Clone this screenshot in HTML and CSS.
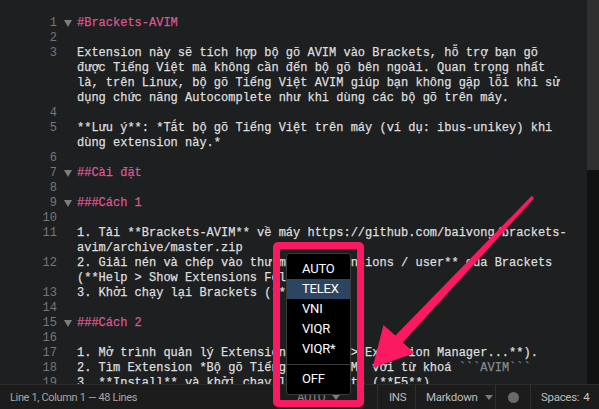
FILE: index.html
```html
<!DOCTYPE html>
<html lang="vi">
<head>
<meta charset="utf-8">
<title>Brackets AVIM</title>
<link rel="stylesheet" href="styles.css">
</head>
<body>
<div class="app">
  <div class="main">
    <div class="editor">
      <div class="row"><span class="ln">1</span><span class="fold"><i class="tri"></i></span><span class="code h">#Brackets-AVIM</span></div>
      <div class="row"><span class="ln">2</span><span class="fold"></span><span class="code"></span></div>
      <div class="row"><span class="ln">3</span><span class="fold"></span><span class="code">Extension này sẽ tích hợp bộ gõ AVIM vào Brackets, hỗ trợ bạn gõ</span></div>
      <div class="row"><span class="ln"></span><span class="fold"></span><span class="code">được Tiếng Việt mà không cần đến bộ gõ bên ngoài. Quan trọng nhất</span></div>
      <div class="row"><span class="ln"></span><span class="fold"></span><span class="code">là, trên Linux, bộ gõ Tiếng Việt AVIM giúp bạn không gặp lỗi khi sử</span></div>
      <div class="row"><span class="ln"></span><span class="fold"></span><span class="code">dụng chức năng Autocomplete như khi dùng các bộ gõ trên máy.</span></div>
      <div class="row"><span class="ln">4</span><span class="fold"></span><span class="code"></span></div>
      <div class="row"><span class="ln">5</span><span class="fold"></span><span class="code">**Lưu ý**: *Tắt bộ gõ Tiếng Việt trên máy (ví dụ: ibus-unikey) khi</span></div>
      <div class="row"><span class="ln"></span><span class="fold"></span><span class="code">dùng extension này.*</span></div>
      <div class="row"><span class="ln">6</span><span class="fold"></span><span class="code"></span></div>
      <div class="row"><span class="ln">7</span><span class="fold"><i class="tri"></i></span><span class="code h">##Cài đặt</span></div>
      <div class="row"><span class="ln">8</span><span class="fold"></span><span class="code"></span></div>
      <div class="row"><span class="ln">9</span><span class="fold"><i class="tri"></i></span><span class="code h">###Cách 1</span></div>
      <div class="row"><span class="ln">10</span><span class="fold"></span><span class="code"></span></div>
      <div class="row"><span class="ln">11</span><span class="fold"></span><span class="code">1. Tải **Brackets-AVIM** về máy https://github.com/baivong/brackets-</span></div>
      <div class="row"><span class="ln"></span><span class="fold"></span><span class="code">avim/archive/master.zip</span></div>
      <div class="row"><span class="ln">12</span><span class="fold"></span><span class="code">2. Giải nén và chép vào thư mục **extensions / user** của Brackets</span></div>
      <div class="row"><span class="ln"></span><span class="fold"></span><span class="code">(**Help &gt; Show Extensions Folder**)</span></div>
      <div class="row"><span class="ln">13</span><span class="fold"></span><span class="code">3. Khởi chạy lại Brackets (**F5**)</span></div>
      <div class="row"><span class="ln">14</span><span class="fold"></span><span class="code"></span></div>
      <div class="row"><span class="ln">15</span><span class="fold"><i class="tri"></i></span><span class="code h">###Cách 2</span></div>
      <div class="row"><span class="ln">16</span><span class="fold"></span><span class="code"></span></div>
      <div class="row"><span class="ln">17</span><span class="fold"></span><span class="code">1. Mở trình quản lý Extension (**File &gt; Extension Manager...**).</span></div>
      <div class="row"><span class="ln">18</span><span class="fold"></span><span class="code">2. Tìm Extension *Bộ gõ Tiếng Việt AVIM* với từ khoá <span class="tick">```AVIM```</span></span></div>
      <div class="row"><span class="ln">19</span><span class="fold"></span><span class="code">3. **Install** và khởi chạy lại Brackets (**F5**)</span></div>
    </div>
    <div class="scrollbar"><div class="thumb"></div></div>
  </div>
  <div class="statusbar">
    <div class="status-left">Line 1, Column 1 — 48 Lines</div>
    <div class="status-right">
      <div class="item item-avim">AUTO <span class="caret"></span></div>
      <div class="item item-ins">INS</div>
      <div class="item item-lang">Markdown <span class="caret"></span></div>
      <div class="item item-dot"><span class="dot"></span></div>
      <div class="item item-spaces">Spaces: <span class="num">4</span></div>
    </div>
  </div>

  <div class="frame"></div>
  <ul class="menu">
    <li class="menu-item">AUTO</li>
    <li class="menu-item active">TELEX</li>
    <li class="menu-item">VNI</li>
    <li class="menu-item">VIQR</li>
    <li class="menu-item">VIQR*</li>
    <li class="menu-sep"></li>
    <li class="menu-item">OFF</li>
  </ul>

  <svg class="arrow" width="599" height="409" viewBox="0 0 599 409">
    <polygon class="arrow-shadow" points="535,199 533,197 396,337 402,343"/>
    <polygon class="arrow-fill" points="534.2,198.2 531.8,195.8 395.4,335.4 383.5,325 372.5,368 414.5,353 402.8,342.6"/>
  </svg>
</div>
</body>
</html>
```

FILE: styles.css
```css
* { box-sizing: border-box; }
html, body {
  margin: 0;
  padding: 0;
  background: #1d1f21;
}
.app {
  position: relative;
  width: 599px;
  height: 409px;
  overflow: hidden;
  display: flex;
  flex-direction: column;
}
.main {
  flex: 1;
  display: flex;
  min-height: 0;
}
.editor {
  flex: 1;
  padding-top: 16px;
  overflow: hidden;
  font-family: "Liberation Mono", "DejaVu Sans Mono", monospace;
  font-size: 12px;
  line-height: 15px;
  color: #dedede;
}
.row {
  display: flex;
  height: 15px;
  white-space: pre;
}
.ln {
  width: 57px;
  flex: none;
  text-align: right;
  color: #777777;
}
.fold {
  width: 20px;
  flex: none;
  display: flex;
  align-items: center;
  padding-left: 7px;
}
.tri {
  display: block;
  width: 0;
  height: 0;
  border-left: 4px solid transparent;
  border-right: 4px solid transparent;
  border-top: 7px solid #7d7d7d;
}
.code {
  flex: none;
  -webkit-text-stroke: 0.25px currentColor;
}
.h { color: #d9588f; }
.tick { color: #8a8a8a; }

.scrollbar {
  width: 12px;
  flex: none;
  background: #111111;
}
.thumb {
  height: 170px;
  background: #303030;
}

.statusbar {
  height: 25px;
  flex: none;
  display: flex;
  align-items: center;
  background: #1c1c1d;
  border-top: 1px solid #2c2c2c;
  font-family: Roboto, "Noto Sans", sans-serif;
  font-size: 11px;
  letter-spacing: -0.35px;
  color: #a6a6a6;
}
.status-left {
  flex: 1;
  padding-left: 10px;
}
.status-right {
  display: flex;
  height: 100%;
}
.item {
  display: flex;
  align-items: center;
  height: 100%;
  border-left: 1px solid #2f2f2f;
  color: #bcbcbc;
  font-size: 11.5px;
  letter-spacing: -0.3px;
}
.item-avim { border-left: none; width: 96px; padding-left: 16px; color: #8a8a8a; }
.item-ins { width: 38px; padding-left: 11px; }
.item-lang { width: 80px; padding-left: 10px; }
.item-dot { width: 35px; justify-content: center; }
.item-spaces { width: 69px; padding-left: 10px; }
.num { color: #c8c8c8; margin-left: 4px; }
.caret {
  display: inline-block;
  width: 0;
  height: 0;
  margin-left: 7px;
  border-left: 4px solid transparent;
  border-right: 4px solid transparent;
  border-top: 5px solid #7a7a7a;
}
.dot {
  display: block;
  width: 11px;
  height: 11px;
  border-radius: 50%;
  background: #6a6a6a;
}

.frame {
  position: absolute;
  left: 273px;
  top: 242px;
  width: 91px;
  height: 165px;
  border: 7px solid #fb1a62;
  border-radius: 5px;
}
.menu {
  position: absolute;
  left: 286px;
  top: 253px;
  width: 65px;
  height: 142px;
  margin: 0;
  padding: 5px 0 0;
  list-style: none;
  background: #000;
  border: 1px solid #3a3a3a;
  border-radius: 3px;
  font-family: Roboto, "Noto Sans", sans-serif;
  font-size: 13px;
  letter-spacing: -0.2px;
  color: #ffffff;
}
.menu-item {
  height: 20px;
  line-height: 20px;
  padding-left: 15px;
}
.menu-item.active { background: #2c4563; }
.menu-sep {
  height: 1px;
  margin: 5px 0 4px;
  background: #3a3a3a;
}

.arrow {
  position: absolute;
  left: 0;
  top: 0;
  pointer-events: none;
}
.arrow-fill { fill: #fb1a62; }
.arrow-shadow { fill: rgba(0,0,0,0.35); }
```
